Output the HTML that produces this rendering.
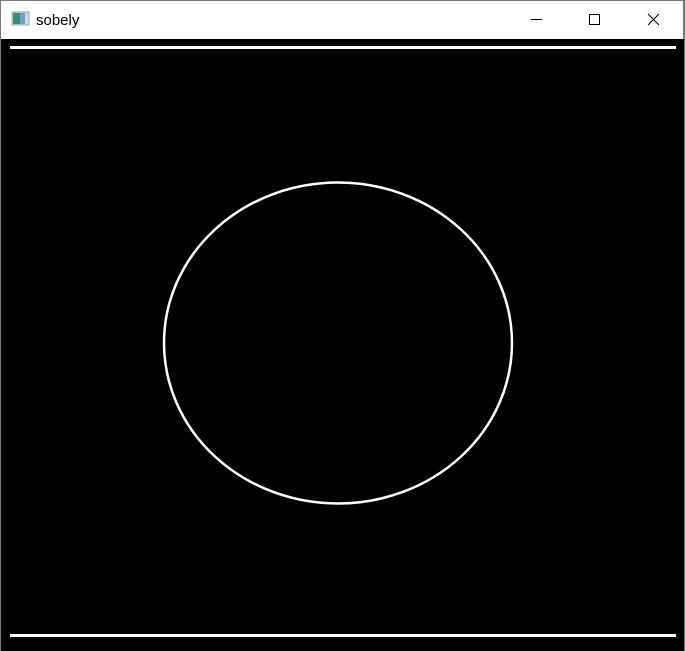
<!DOCTYPE html>
<html><head><meta charset="utf-8"><style>
body{margin:0;width:685px;height:651px;overflow:hidden;background:#fff;font-family:"Liberation Sans","Noto Sans CJK SC",sans-serif;}
.win{position:absolute;left:0;top:0;width:684px;height:650px;border:1px solid #777;border-bottom:none;box-sizing:border-box}
</style></head><body>
<div class="win"></div>
<svg width="685" height="651" style="position:absolute;left:0;top:0">
  <rect x="1" y="39" width="683" height="612" fill="#000"/>
  <rect x="0" y="0" width="1" height="651" fill="#777"/>
  <rect x="684" y="0" width="1" height="651" fill="#777"/>
  <rect x="0" y="0" width="685" height="1" fill="#777"/>
  <!-- icon -->
  <rect x="12" y="12" width="17" height="13" fill="#cfd8dc" stroke="#9aa" stroke-width="1"/>
  <rect x="13" y="13" width="7" height="11" fill="#3a8a7a"/>
  <rect x="20" y="13" width="5" height="11" fill="#6fa0c8"/>
  <text x="36" y="25" font-size="15" fill="#000" font-family="Liberation Sans, sans-serif">sobely</text>
  <!-- controls -->
  <line x1="531" y1="19.5" x2="542" y2="19.5" stroke="#000" stroke-width="1"/>
  <rect x="589.5" y="14.5" width="10" height="10" fill="none" stroke="#000" stroke-width="1"/>
  <line x1="648" y1="14" x2="659" y2="25" stroke="#000" stroke-width="1"/>
  <line x1="659" y1="14" x2="648" y2="25" stroke="#000" stroke-width="1"/>
  <!-- lines -->
  <rect x="10" y="46" width="666" height="3" fill="#fff"/>
  <rect x="10" y="634" width="666" height="3" fill="#fff"/>
  <!-- circle -->
  <ellipse cx="338" cy="343" rx="174" ry="160.5" fill="none" stroke="#fff" stroke-width="2.5"/>
</svg>
</body></html>
